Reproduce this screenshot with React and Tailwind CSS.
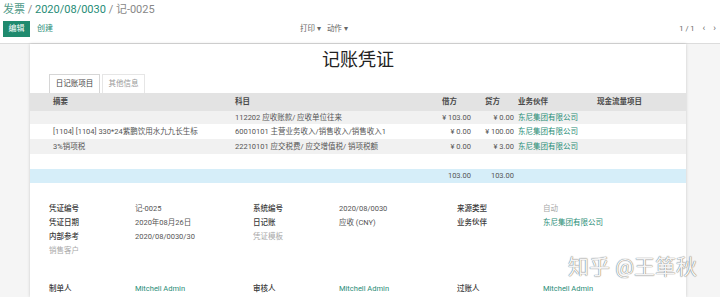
import React from "react";

const F = { fontFamily: '"Roboto","Noto Sans CJK SC",sans-serif' };

function Link({ children }) {
  return <span className="text-[#1f8c76]">{children}</span>;
}

const rows = [
  { bg: "bg-[#f1f1f1]", h: "h-[13px]", a: "", b: "112202 应收账款/ 应收单位往来", d: "¥ 103.00", c: "¥ 0.00" },
  { bg: "bg-white", h: "h-[15px]", a: "[1104] [1104] 330*24紫鹏饮用水九九长生标", b: "60010101 主营业务收入/销售收入/销售收入1", d: "¥ 0.00", c: "¥ 100.00" },
  { bg: "bg-[#f1f1f1]", h: "h-[15px]", a: "3%销项税", b: "22210101 应交税费/ 应交增值税/ 销项税额", d: "¥ 0.00", c: "¥ 3.00" },
];

function Field({ label, value, light }) {
  return (
    <div className="flex w-[204px]">
      <div className="w-[86px] font-medium text-[#3a3a3a]">{label}</div>
      <div className={light ? "text-[#a8a8a8]" : "text-[#555]"}>{value}</div>
    </div>
  );
}

export default function App() {
  return (
    <div className="relative w-[720px] h-[297px] overflow-hidden bg-white text-[#555]" style={F}>
      {/* control panel */}
      <div className="h-[44px] border-b border-[#dcdcdc] bg-white">
        <div className="pl-[3px] pt-[1px] h-[18px] text-[11px] leading-[17px]">
          <span className="text-[#4f9a88]">发票</span>
          <span className="text-[#888]"> / </span>
          <Link>2020/08/0030</Link>
          <span className="text-[#888]"> / 记-0025</span>
        </div>
        <div className="flex items-center h-[17px] mt-[2px]">
          <div className="ml-[3px] w-[27px] h-[16px] bg-[#1f8a6e] text-white text-[8px] flex items-center justify-center">编辑</div>
          <div className="ml-[7px] text-[8px] text-[#1f8c76]">创建</div>
          <div className="ml-[247px] flex gap-[6px] text-[7.5px] text-[#666]">
            <span>打印 ▾</span>
            <span>动作 ▾</span>
          </div>
          <div className="ml-auto mr-[4px] flex items-center gap-[8px] text-[7.5px] text-[#666]">
            <span>1 / 1</span>
            <span className="text-[9px]">‹</span>
            <span className="text-[9px]">›</span>
          </div>
        </div>
      </div>

      {/* content */}
      <div className="flex h-[253px]">
        <div className="w-[30px] bg-[#f5f5f5]" />
        <div className="w-[656px] bg-white shadow-[0_0_3px_rgba(0,0,0,0.18)] relative z-[1]">
          <div className="text-center text-[18px] leading-[27px] pt-[2px] text-[#222]">记账凭证</div>
          <div className="flex pl-[19px] h-[19px] mt-[1px] text-[7.5px]">
            <div className="w-[51px] border border-b-0 border-[#d6d6d6] flex items-center justify-center text-[#444] bg-white">日记账项目</div>
            <div className="ml-[2px] w-[43px] border border-b-0 border-[#e6e6e6] flex items-center justify-center text-[#999]">其他信息</div>
          </div>
          <div className="text-[7.5px]">
            <div className="flex h-[18px] items-center bg-[#e3e3e3] font-semibold text-[#4a4a4a]">
              <div className="w-[23px]" />
              <div className="w-[182px]">摘要</div>
              <div className="w-[200px]">科目</div>
              <div className="w-[36px] pl-[7px]">借方</div>
              <div className="w-[43px] pl-[14px]">贷方</div>
              <div className="w-[83px] pl-[4px]">业务伙伴</div>
              <div className="flex-1">现金流量项目</div>
            </div>
            {rows.map((r, i) => (
              <div key={i} className={`flex items-center ${r.h} ${r.bg}`}>
                <div className="w-[23px]" />
                <div className="w-[182px] whitespace-nowrap">{r.a}</div>
                <div className="w-[200px] whitespace-nowrap">{r.b}</div>
                <div className="w-[36px] text-right whitespace-nowrap">{r.d}</div>
                <div className="w-[43px] text-right whitespace-nowrap">{r.c}</div>
                <div className="w-[83px] pl-[4px] whitespace-nowrap"><Link>东尼集团有限公司</Link></div>
                <div className="flex-1" />
              </div>
            ))}
            <div className="h-[15px] bg-white" />
            <div className="flex h-[14px] items-center bg-[#d6eef9]">
              <div className="w-[405px]" />
              <div className="w-[36px] text-right">103.00</div>
              <div className="w-[43px] text-right">103.00</div>
            </div>
          </div>

          <div className="pl-[19px] pt-[19px] text-[7.5px]">
            <div className="flex h-[14px] items-center">
              <Field label="凭证编号" value="记-0025" />
              <Field label="系统编号" value="2020/08/0030" />
              <Field label="来源类型" value="自动" light />
            </div>
            <div className="flex h-[14px] items-center">
              <Field label="凭证日期" value="2020年08月26日" />
              <Field label="日记账" value="应收 (CNY)" />
              <Field label="业务伙伴" value={<Link>东尼集团有限公司</Link>} />
            </div>
            <div className="flex h-[14px] items-center">
              <Field label="内部参考" value="2020/08/0030/30" />
              <div className="flex w-[204px]">
                <div className="text-[#a8a8a8]">凭证模板</div>
              </div>
            </div>
            <div className="flex h-[14px] items-center text-[#a8a8a8]">销售客户</div>
            <div className="flex h-[14px] items-center mt-[24px]">
              <Field label="制单人" value={<Link>Mitchell Admin</Link>} />
              <Field label="审核人" value={<Link>Mitchell Admin</Link>} />
              <Field label="过账人" value={<Link>Mitchell Admin</Link>} />
            </div>
          </div>
        </div>
        <div className="flex-1 bg-[#f5f5f5]" />
      </div>

      {/* watermark */}
      <div
        className="absolute left-[568px] top-[253px] z-[2] text-[21px] leading-[28px] text-[#f4f4f4] whitespace-nowrap"
        style={{ textShadow: "0 0 1px rgba(0,0,0,0.55), 0 0 1px rgba(0,0,0,0.35)" }}
      >
        知乎 @王箪秋
      </div>
    </div>
  );
}
